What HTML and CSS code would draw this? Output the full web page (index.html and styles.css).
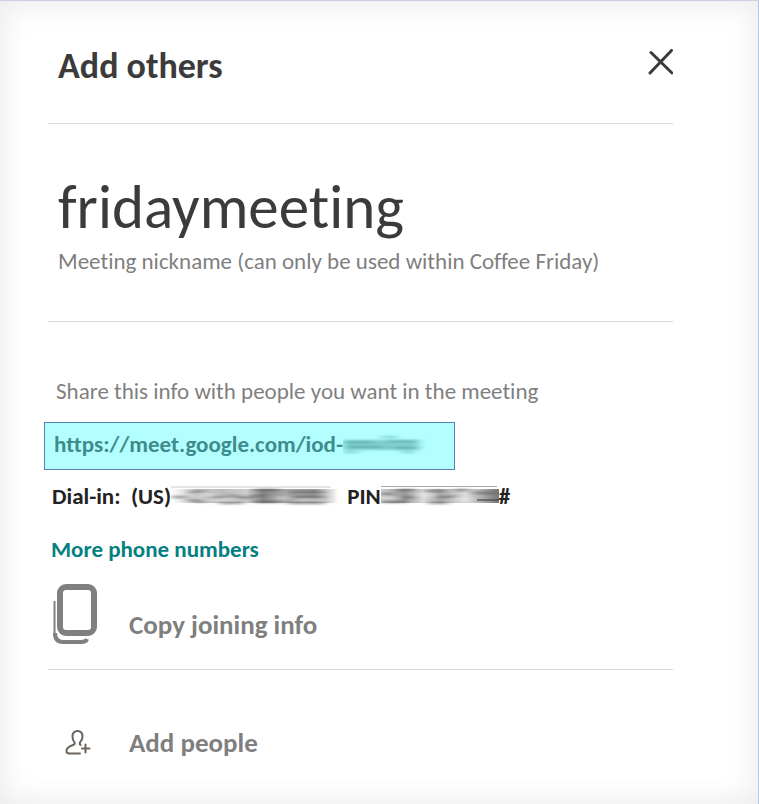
FILE: index.html
```html
<!DOCTYPE html>
<html lang="en">
<head>
<meta charset="utf-8">
<meta name="viewport" content="width=device-width, initial-scale=1">
<title>Add others</title>
<link rel="stylesheet" href="styles.css">
</head>
<body>
<main class="panel">
  <header class="header">
    <h1 class="title">Add others</h1>
    <button class="close" type="button" aria-label="Close">
      <svg width="26" height="26" viewBox="0 0 26 26"><path d="M4 3.500 25 24M24.500 1.500 3 24" fill="none" stroke="#3b3b3b" stroke-width="3" stroke-linecap="round"/></svg>
    </button>
  </header>

  <section class="nickname">
    <h2 class="name">fridaymeeting</h2>
    <p class="note">Meeting nickname (can only be used within Coffee Friday)</p>
  </section>

  <section class="share">
    <p class="lead">Share this info with people you want in the meeting</p>
    <a class="link" href="#">https://meet.google.com/iod-<svg class="smudge" width="86" height="24" viewBox="0 0 86 24" aria-hidden="true">
      <defs><filter id="soft" x="-20%" y="-50%" width="140%" height="200%"><feGaussianBlur stdDeviation="4 1"/></filter></defs>
      <g filter="url(#soft)" fill="none" stroke="#4f9f9f">
        <path d="M0 13H76" stroke-width="10" opacity=".5"/>
        <path d="M0 10H30M44 9H74M4 15H40M50 16H76" stroke-width="2" opacity=".7"/>
        <path d="M0 20H16M58 20H72M38 5H54" stroke-width="2" opacity=".5"/>
      </g></svg></a>
    <p class="dial"><span>Dial-in:&nbsp; (US)</span><svg class="smudge" width="168" height="20" viewBox="0 0 168 20" aria-hidden="true">
      <defs>
        <linearGradient id="phone"><stop offset="0" stop-color="#fff"/><stop offset=".14" stop-color="#ccc"/><stop offset=".3" stop-color="#bbb"/><stop offset=".45" stop-color="#ccc"/><stop offset=".55" stop-color="#888"/><stop offset=".68" stop-color="#aaa"/><stop offset=".85" stop-color="#999"/><stop offset="1" stop-color="#fff"/></linearGradient>
        <filter id="smear" x="-10%" y="-50%" width="120%" height="200%"><feGaussianBlur stdDeviation="4 1"/></filter>
      </defs>
      <path d="M0 3H168V17H0Z" fill="url(#phone)"/>
      <path d="M0 1H160" stroke="#ccc"/>
      <g filter="url(#smear)" fill="none" stroke="#555" stroke-width="2" opacity=".7">
        <path d="M0 11H16M18 6 34 5M16 14 34 16M40 11H54M58 9 72 12 94 9M48 17H72M84 4H108M84 16H108M118 6H154M120 11H154M116 17H154"/>
        <path d="M32 9H46M38 14H62M104 12H118M124 14H150" stroke="#eee"/>
      </g></svg><span class="pin">PIN</span><svg class="smudge" width="118" height="20" viewBox="0 0 118 20" aria-hidden="true">
      <defs><linearGradient id="code"><stop offset="0" stop-color="#ccc"/><stop offset=".2" stop-color="#999"/><stop offset=".36" stop-color="#ddd"/><stop offset=".5" stop-color="#aaa"/><stop offset=".72" stop-color="#ddd"/><stop offset="1" stop-color="#777"/></linearGradient></defs>
      <path d="M0 3H118V17H0Z" fill="url(#code)"/>
      <path d="M0 0.500H116" stroke="#aaa"/>
      <g filter="url(#smear)" fill="none" stroke="#555" stroke-width="2" opacity=".7">
        <path d="M0 8H12M16 4H34M16 12 34 11M0 16H24M44 5H64M48 17H66M56 11H76M74 4H88M92 7H116"/>
        <path d="M0 12H18M38 9H52M72 13H90" stroke="#eee"/>
      </g>
      <path d="M96 14H118" stroke="#333" stroke-width="1"/></svg><span>#</span></p>
    <a class="more" href="#">More phone numbers</a>
    <button class="action copy" type="button">
      <svg class="icon" width="46" height="62" viewBox="0 0 46 62" aria-hidden="true"><g fill="none" stroke="#7f7f7f"><rect x="8" y="4" width="34" height="46" rx="6" stroke-width="6"/><path d="M2.500 18V52" stroke-width="2"/><path d="M3 50Q3 59 11 59H29Q34 59 35 56" stroke-width="4"/></g></svg>
      <span>Copy joining info</span>
    </button>
  </section>

  <section class="people">
    <button class="action" type="button">
      <svg class="icon" width="46" height="30" viewBox="0 0 46 30" aria-hidden="true"><path d="M28 25.500H17.500Q14 25.500 14.500 22.500Q15 19 21 17Q24 16 22 13.500Q20.500 11.500 20.500 8.500Q20.500 3 25.500 3Q30.500 3 30.500 8.500Q30.500 11.500 28.500 13.500Q27 15.500 28.500 17M30 20.500H37.500M33.500 16.500V24.500" fill="none" stroke="#6c655e" stroke-width="2" stroke-linecap="round" stroke-linejoin="round"/></svg>
      <span>Add people</span>
    </button>
  </section>
</main>
</body>
</html>
```
FILE: styles.css
```css
* {
  box-sizing: border-box;
}

body {
  margin: 0;
  font-family: Carlito, Lato, "Liberation Sans", sans-serif;
  font-variant-ligatures: none;
  color: #3b3b3b;
}

h1, h2, p {
  margin: 0;
}

button {
  padding: 0;
  border: 0;
  background: none;
  font: inherit;
  color: inherit;
}

a {
  text-decoration: none;
}

.panel {
  min-height: 100vh;
  padding: 0 85px 0 48px;
  border-top: 1px solid #c9d0e4;
  border-right: 1px solid #bcc8e2;
  background: #fff;
  box-shadow: inset 0 0 28px 4px #ececec;
}

.header {
  display: flex;
  justify-content: space-between;
  align-items: center;
  height: 123px;
  padding: 8px 0 0 10px;
  border-bottom: 1px solid #d9d9d9;
}

.title {
  font-size: 36px;
  line-height: 40px;
}

.close {
  height: 26px;
  margin-bottom: 8px;
}

.close svg {
  display: block;
}

.nickname {
  padding: 46px 0 44px 10px;
  border-bottom: 1px solid #d9d9d9;
}

.name {
  font-size: 61px;
  line-height: 75px;
  font-weight: 400;
}

.note, .lead {
  font-size: 23px;
  line-height: 32px;
  color: #7f7f7f;
}

.share {
  display: flex;
  flex-direction: column;
  align-items: flex-start;
  padding: 53px 0 24px;
  border-bottom: 1px solid #d9d9d9;
}

.lead {
  padding-left: 8px;
}

.link, .dial, .more {
  display: flex;
  align-items: center;
  font-size: 23px;
  font-weight: 700;
  white-space: pre;
}

.link {
  width: 411px;
  height: 48px;
  margin: 15px 0 0 -4px;
  padding: 0 0 4px 9px;
  border: 1px solid #5482b8;
  background: #b3ffff;
  color: #3f8c8c;
}

.dial {
  height: 52px;
  padding-left: 4px;
  color: #222;
}

.pin {
  padding-left: 8px;
}

.smudge {
  flex: none;
}

.more {
  height: 53px;
  padding-left: 3px;
  color: #058080;
}

.action {
  display: flex;
  align-items: center;
  gap: 31px;
  padding-left: 4px;
  font-size: 27px;
  font-weight: 700;
  color: #7f7f7f;
}

.copy {
  align-items: flex-end;
  margin-top: 8px;
}

.copy span {
  padding-bottom: 4px;
}

.icon {
  flex: none;
}

.people {
  padding: 56px 0 24px;
}
```
